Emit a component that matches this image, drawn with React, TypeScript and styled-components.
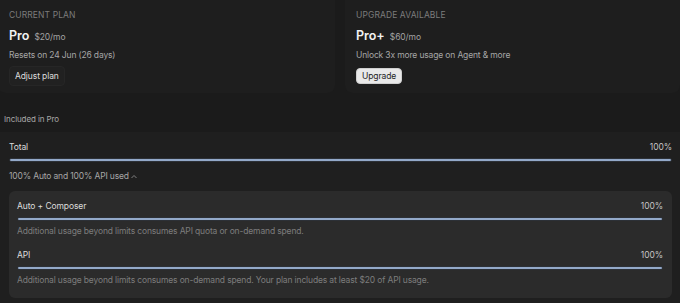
import React from 'react';
import styled, { createGlobalStyle } from 'styled-components';

const GlobalStyle = createGlobalStyle`
  body {
    margin: 0;
    background: #1b1b1b;
    font-family: Inter, "Noto Sans", sans-serif;
    color: #e6e6e6;
    -webkit-font-smoothing: antialiased;
  }
`;

const Page = styled.div`
  width: 680px;
  height: 303px;
  overflow: hidden;
  display: flex;
  flex-direction: column;
`;

const PlanGrid = styled.div`
  display: grid;
  grid-template-columns: 337px 1fr;
  gap: 10px;
  margin-left: -2px;
`;

const PlanCard = styled.div`
  background: #1e1e1e;
  border-radius: 0 0 8px 8px;
  padding: 9px 11px 0;
  height: 84px;
  display: flex;
  flex-direction: column;
  align-items: flex-start;
`;

const Eyebrow = styled.div`
  font-size: 8.5px;
  letter-spacing: 0.1px;
  text-transform: uppercase;
  color: #7c7c7c;
  line-height: 12px;
`;

const PlanName = styled.div`
  margin-top: 7px;
  display: flex;
  align-items: baseline;
  gap: 5px;
  line-height: 16px;

  strong {
    font-size: 12.5px;
    font-weight: 600;
    color: #f2f2f2;
  }
  span {
    font-size: 8.5px;
    letter-spacing: -0.1px;
    color: #a3a3a3;
  }
`;

const Note = styled.div`
  margin-top: 4px;
  font-size: 8.5px;
  letter-spacing: -0.15px;
  line-height: 13px;
  color: #a6a6a6;
`;

const PlanButton = styled.button<{ $light?: boolean }>`
  margin-top: ${p => (p.$light ? '6px' : '4px')};
  font-family: inherit;
  font-size: 8.5px;
  letter-spacing: -0.1px;
  line-height: 12px;
  padding: ${p => (p.$light ? '1px 5px' : '3px 5px')};
  border-radius: 4px;
  border: 1px solid ${p => (p.$light ? '#cfcfcf' : '#262626')};
  background: ${p => (p.$light ? '#e9e9e9' : '#212121')};
  color: ${p => (p.$light ? '#1e1e1e' : '#dedede')};
`;

const SectionLabel = styled.div`
  padding: 0 4px;
  margin-top: 20px;
  font-size: 8px;
  letter-spacing: -0.1px;
  line-height: 12px;
  color: #a8a8a8;
`;

const UsagePanel = styled.div`
  margin-top: 7px;
  flex: 1;
  background: #1f1f1f;
  padding: 9px 8px 0 9px;
`;

const MeterHead = styled.div`
  display: flex;
  justify-content: space-between;
  font-size: 8.5px;
  letter-spacing: -0.1px;
  line-height: 13px;
  color: #dcdcdc;

  span:last-child {
    color: #c4c4c4;
  }
`;

const Track = styled.div`
  margin-top: 4px;
  height: 4px;
  border-radius: 2px;
  background: #3a3f47;
  border: 1px solid #2c3036;
  box-sizing: border-box;
  overflow: hidden;
`;

const Fill = styled.div`
  height: 100%;
  background: #93a9c9;
`;

const Toggle = styled.div`
  margin-top: 8px;
  display: flex;
  align-items: center;
  gap: 1px;
  font-size: 8.5px;
  letter-spacing: -0.15px;
  line-height: 13px;
  color: #a6a6a6;
`;

const Breakdown = styled.div`
  margin-top: 8px;
  background: #2b2b2b;
  border-radius: 6px;
  padding: 9px 9px 12px 8px;
  display: flex;
  flex-direction: column;
  gap: 12px;
`;

const Hint = styled.div`
  margin-top: 4px;
  font-size: 8.5px;
  letter-spacing: -0.15px;
  line-height: 12px;
  color: #7d7d7d;
`;

const Meter: React.FC<{ label: string; pct: number }> = ({ label, pct }) => (
  <div>
    <MeterHead>
      <span>{label}</span>
      <span>{pct}%</span>
    </MeterHead>
    <Track>
      <Fill style={{ width: `${pct}%` }} />
    </Track>
  </div>
);

const App: React.FC = () => (
  <Page>
    <GlobalStyle />
    <PlanGrid>
      <PlanCard>
        <Eyebrow>Current plan</Eyebrow>
        <PlanName>
          <strong>Pro</strong>
          <span>$20/mo</span>
        </PlanName>
        <Note>Resets on 24 Jun (26 days)</Note>
        <PlanButton>Adjust plan</PlanButton>
      </PlanCard>
      <PlanCard>
        <Eyebrow>Upgrade available</Eyebrow>
        <PlanName>
          <strong>Pro+</strong>
          <span>$60/mo</span>
        </PlanName>
        <Note>Unlock 3x more usage on Agent &amp; more</Note>
        <PlanButton $light>Upgrade</PlanButton>
      </PlanCard>
    </PlanGrid>

    <SectionLabel>Included in Pro</SectionLabel>

    <UsagePanel>
      <Meter label="Total" pct={100} />
      <Toggle>
        100% Auto and 100% API used
        <svg width="8" height="8" viewBox="0 0 8 8" fill="none" stroke="#8a8a8a" strokeWidth="0.9">
          <path d="M1.5 5 L4 2.5 L6.5 5" />
        </svg>
      </Toggle>
      <Breakdown>
        <div>
          <Meter label="Auto + Composer" pct={100} />
          <Hint>Additional usage beyond limits consumes API quota or on-demand spend.</Hint>
        </div>
        <div>
          <Meter label="API" pct={100} />
          <Hint>
            Additional usage beyond limits consumes on-demand spend. Your plan includes at least $20 of API usage.
          </Hint>
        </div>
      </Breakdown>
    </UsagePanel>
  </Page>
);

export default App;
